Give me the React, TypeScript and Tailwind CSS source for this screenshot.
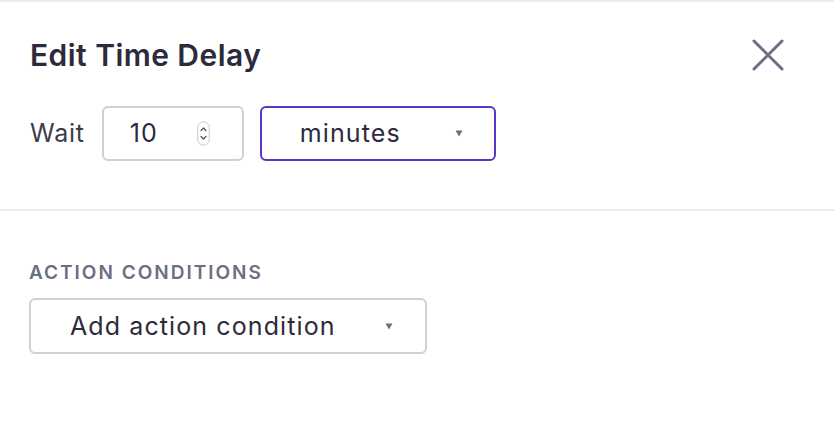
const font = { fontFamily: 'Inter, "Noto Sans", sans-serif' };

function Caret() {
  return (
    <svg width="8" height="7" viewBox="0 0 8 7" className="shrink-0">
      <path d="M0.5 0.5 H7.5 L4 6.5 Z" fill="#6b6f85" />
    </svg>
  );
}

function Spinner() {
  return (
    <svg width="13" height="25" viewBox="0 0 13 25" className="shrink-0">
      <rect x="0.75" y="0.75" width="11.5" height="23.5" rx="5.75" fill="none" stroke="#c9c9d3" strokeWidth="1" />
      <path d="M4 9.5 L6.5 7 L9 9.5" fill="none" stroke="#4a4a5c" strokeWidth="1.2" strokeLinecap="round" strokeLinejoin="round" />
      <path d="M4 15.5 L6.5 18 L9 15.5" fill="none" stroke="#4a4a5c" strokeWidth="1.2" strokeLinecap="round" strokeLinejoin="round" />
    </svg>
  );
}

export default function App() {
  return (
    <div className="h-[442px] w-[834px] overflow-hidden bg-white text-[#2e2e3f]" style={font}>
      <div className="border-t-2 border-[#ebebf0]">
        <div className="flex items-start justify-between pl-[30px] pr-[50px] pt-[33px]">
          <h1 className="text-[30px] font-semibold leading-[40px] tracking-[0.45px] text-[#2b2b3c]">Edit Time Delay</h1>
          <button className="mt-[5px] flex h-[30px] w-[32px] items-center justify-center">
            <svg width="32" height="32" viewBox="0 0 32 32">
              <path d="M2 2 L30 30 M30 2 L2 30" stroke="#6b6f85" strokeWidth="3" strokeLinecap="round" />
            </svg>
          </button>
        </div>
        <div className="flex items-center pl-[30px] pt-[31px]">
          <span className="mr-[17px] text-[25px] leading-none tracking-[0.8px] text-[#3b3b4e]">Wait</span>
          <div className="flex h-[55px] w-[142px] items-center justify-between rounded-[6px] border-2 border-[#cfcfda] pl-[26px] pr-[32px]">
            <span className="text-[25px] leading-none tracking-[1px] text-[#2b2b3c]">10</span>
            <Spinner />
          </div>
          <div className="ml-[16px] flex h-[55px] w-[236px] items-center justify-between rounded-[6px] border-2 border-[#5b34c8] pl-[38px] pr-[31px]">
            <span className="text-[25px] leading-none tracking-[1.1px] text-[#2b2b3c]">minutes</span>
            <Caret />
          </div>
        </div>
        <div className="mt-[48px] border-t-2 border-[#ebebf0]" />
        <div className="pl-[29px] pt-[52px]">
          <div className="text-[19px] font-semibold uppercase leading-none tracking-[2px] text-[#6b7080]">Action Conditions</div>
          <div className="mt-[16px] flex h-[56px] w-[398px] items-center justify-between rounded-[6px] border-2 border-[#cfcfda] pl-[39px] pr-[32px]">
            <span className="text-[25px] leading-none tracking-[1.1px] text-[#2b2b3c]">Add action condition</span>
            <Caret />
          </div>
        </div>
      </div>
    </div>
  );
}
